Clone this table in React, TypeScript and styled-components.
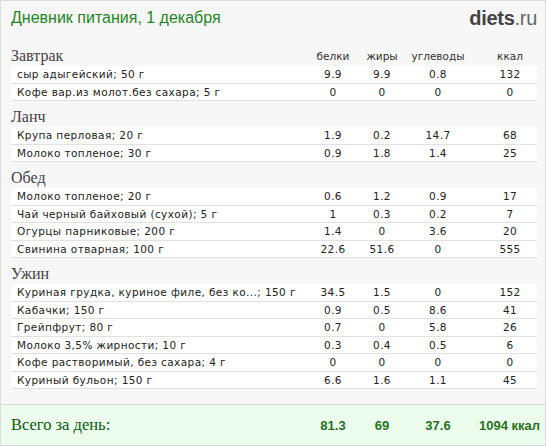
import styled, { createGlobalStyle } from "styled-components";

const GlobalStyle = createGlobalStyle`
  html, body {
    margin: 0;
    padding: 0;
    background: #ffffff;
  }
`;

type Item = { name: string; p: string; f: string; c: string; kcal: string };
type Meal = { title: string; items: Item[] };

const meals: Meal[] = [
  {
    title: "Завтрак",
    items: [
      { name: "сыр адыгейский; 50 г", p: "9.9", f: "9.9", c: "0.8", kcal: "132" },
      { name: "Кофе вар.из молот.без сахара; 5 г", p: "0", f: "0", c: "0", kcal: "0" },
    ],
  },
  {
    title: "Ланч",
    items: [
      { name: "Крупа перловая; 20 г", p: "1.9", f: "0.2", c: "14.7", kcal: "68" },
      { name: "Молоко топленое; 30 г", p: "0.9", f: "1.8", c: "1.4", kcal: "25" },
    ],
  },
  {
    title: "Обед",
    items: [
      { name: "Молоко топленое; 20 г", p: "0.6", f: "1.2", c: "0.9", kcal: "17" },
      { name: "Чай черный байховый (сухой); 5 г", p: "1", f: "0.3", c: "0.2", kcal: "7" },
      { name: "Огурцы парниковые; 200 г", p: "1.4", f: "0", c: "3.6", kcal: "20" },
      { name: "Свинина отварная; 100 г", p: "22.6", f: "51.6", c: "0", kcal: "555" },
    ],
  },
  {
    title: "Ужин",
    items: [
      { name: "Куриная грудка, куриное филе, без ко...; 150 г", p: "34.5", f: "1.5", c: "0", kcal: "152" },
      { name: "Кабачки; 150 г", p: "0.9", f: "0.5", c: "8.6", kcal: "41" },
      { name: "Грейпфрут; 80 г", p: "0.7", f: "0", c: "5.8", kcal: "26" },
      { name: "Молоко 3,5% жирности; 10 г", p: "0.3", f: "0.4", c: "0.5", kcal: "6" },
      { name: "Кофе растворимый, без сахара; 4 г", p: "0", f: "0", c: "0", kcal: "0" },
      { name: "Куриный бульон; 150 г", p: "6.6", f: "1.6", c: "1.1", kcal: "45" },
    ],
  },
];

export default function App() {
  return (
    <>
      <GlobalStyle />
      <Page>
        <TitleBar>
          <Title>Дневник питания, 1 декабря</Title>
          <Logo>
            <b>diets</b>.ru
          </Logo>
        </TitleBar>
        <Body>
          {meals.map((meal, i) => (
            <Section key={meal.title}>
              <MealHeader $first={i === 0}>
                <MealTitle>{meal.title}</MealTitle>
                {i === 0 && (
                  <>
                    <ColLabel>белки</ColLabel>
                    <ColLabel>жиры</ColLabel>
                    <ColLabel>углеводы</ColLabel>
                    <ColLabel $kcal>ккал</ColLabel>
                  </>
                )}
              </MealHeader>
              {meal.items.map((item) => (
                <Row key={item.name}>
                  <Name>{item.name}</Name>
                  <Num>{item.p}</Num>
                  <Num>{item.f}</Num>
                  <Num>{item.c}</Num>
                  <Num $kcal>{item.kcal}</Num>
                </Row>
              ))}
            </Section>
          ))}
        </Body>
        <Footer>
          <FooterLabel>Всего за день:</FooterLabel>
          <Total>81.3</Total>
          <Total>69</Total>
          <Total>37.6</Total>
          <Total $kcal>1094 ккал</Total>
        </Footer>
      </Page>
    </>
  );
}

const cols = "1fr 52px 46px 66px 66px";

const Page = styled.div`
  width: 544px;
  height: 444px;
  border: 1px solid #dcdcdc;
  background: #f7f7f7;
  display: flex;
  flex-direction: column;
`;

const TitleBar = styled.div`
  height: 34px;
  padding: 0 8px 0 10px;
  display: flex;
  align-items: center;
  justify-content: space-between;
`;

const Title = styled.div`
  font-family: "Liberation Sans", Arial, sans-serif;
  font-size: 16px;
  color: #1e861e;
`;

const Logo = styled.div`
  font-family: "Liberation Sans", Arial, sans-serif;
  font-size: 20px;
  color: #666;
  letter-spacing: -0.3px;
  b {
    color: #444;
  }
`;

const Body = styled.div`
  flex: 1;
  padding: 11px 8px 0 10px;
`;

const Section = styled.div``;

const MealHeader = styled.div<{ $first?: boolean }>`
  display: grid;
  grid-template-columns: ${cols};
  align-items: center;
  height: 20px;
  margin-top: ${(p) => (p.$first ? "0" : "6px")};
`;

const MealTitle = styled.div`
  font-family: "Liberation Serif", Georgia, serif;
  font-size: 16px;
  color: #444;
`;

const ColLabel = styled.div<{ $kcal?: boolean }>`
  font-family: "DejaVu Sans", Verdana, sans-serif;
  font-size: 10.5px;
  color: #333;
  text-align: center;
  padding-left: ${(p) => (p.$kcal ? "12px" : "0")};
`;

const Row = styled.div`
  display: grid;
  grid-template-columns: ${cols};
  align-items: center;
  height: 16.5px;
  background: #fff;
  border-bottom: 1px solid #e2e2e2;
  font-family: "DejaVu Sans", Verdana, sans-serif;
  font-size: 10.5px;
  color: #222;
  letter-spacing: 0.4px;
`;

const Name = styled.div`
  padding-left: 6px;
  white-space: nowrap;
  overflow: hidden;
`;

const Num = styled.div<{ $kcal?: boolean }>`
  text-align: center;
  padding-left: ${(p) => (p.$kcal ? "12px" : "0")};
`;

const Footer = styled.div`
  height: 40px;
  border-top: 1px solid #dcdcdc;
  background: #edfded;
  padding: 0 8px 0 10px;
  display: grid;
  grid-template-columns: ${cols};
  align-items: center;
`;

const FooterLabel = styled.div`
  font-family: "Liberation Serif", Georgia, serif;
  font-size: 16.5px;
  color: #0b5a0b;
`;

const Total = styled.div<{ $kcal?: boolean }>`
  font-family: "Liberation Sans", Arial, sans-serif;
  font-weight: bold;
  font-size: 13px;
  color: #26731c;
  text-align: center;
  padding-left: ${(p) => (p.$kcal ? "8px" : "0")};
  white-space: nowrap;
`;
